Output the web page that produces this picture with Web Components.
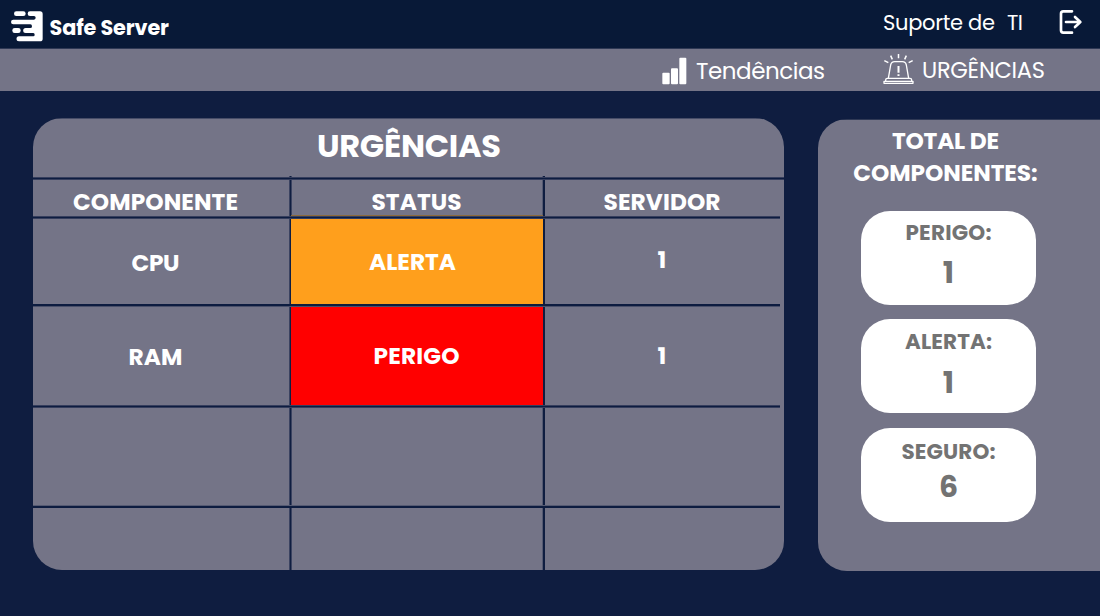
<!DOCTYPE html>
<html lang="pt-BR">
<head>
<meta charset="utf-8">
<title>Safe Server</title>
<style>
html,body{margin:0;height:100%;overflow:hidden;background:#0f1d40}
body{font-family:Poppins,Inter,"Open Sans",sans-serif;color:#fff}
</style>
</head>
<body>
<safe-app></safe-app>
<script>
const define = (name, html, after) => {
  const t = document.createElement('template');
  t.innerHTML = html;
  customElements.define(name, class extends HTMLElement {
    constructor() {
      super();
      this.attachShadow({mode: 'open'}).append(t.content.cloneNode(true));
    }
    connectedCallback() { if (after) after(this); }
  });
};

/* Text run tracked so that it fills the width in "w". */
define('fit-text', `<style>
:host{display:block;flex:none;white-space:pre;line-height:1}
span{display:inline-block}
</style><span><slot></slot></span>`, el => {
  const size = el.getAttribute('size'), w = +el.getAttribute('w');
  if (size) el.style.fontSize = size + 'px';
  if (!w) return;
  const span = el.shadowRoot.querySelector('span');
  el.style.width = w + 'px';
  span.style.letterSpacing = (w - span.getBoundingClientRect().width) / (el.textContent.length - 1) + 'px';
});

define('brand-logo', `<style>:host{display:block;width:32px;height:31px}svg{display:block}</style>
<svg width="32" height="31" viewBox="34 35 96 93" fill="#fff">
<path d="M91 36H121Q129 36 129 44V118Q129 126 121 126H58A7.5 7.5 0 0 1 58 111H101Q105 111 105 106T101 101H78A7.5 7.5 0 0 1 78 86H92Q97 86 97 80.500T92 75H41A7 7 0 0 1 41 61H103Q108 61 108 55.500T103 50H91A7 7 0 0 1 91 36Z"/>
<rect x="43" y="36" width="35" height="14" rx="7"/><rect x="38" y="86" width="25" height="15" rx="7"/></svg>`);

define('logout-icon', `<style>:host{display:block}svg{display:block}</style>
<svg width="24" height="26" viewBox="598 29 72 78" fill="none" stroke="#fff" stroke-width="8" stroke-linecap="round" stroke-linejoin="round">
<path d="M637 36H611Q604 36 604 43V93Q604 100 611 100H637M619 68H661M646 53L662 68L646 83"/></svg>`);

define('bars-icon', `<style>:host{display:block}svg{display:block}</style>
<svg width="25" height="28" viewBox="65 169 75 84" fill="#fff">
<rect x="66" y="216" width="22" height="35" rx="3"/><rect x="92" y="203" width="21" height="48" rx="3"/><rect x="117" y="171" width="21" height="80" rx="3"/></svg>`);

define('siren-icon', `<style>:host{display:block}svg{display:block}</style>
<svg width="31" height="32" viewBox="68 159 93 96" fill="none" stroke="#fff" stroke-width="4" stroke-linejoin="round">
<path d="M84 235L91 195Q93 185 103 185H126Q136 185 138 195L145 235M76 244V240Q76 235 81 235H149Q154 235 154 240V244M71 244H158V250H71Z"/>
<path d="M114.500 162V175M91 167L96 178M138 167L133 178M72 182L84 188M157 182L145 188" stroke-width="4.500"/>
<path d="M114.500 198V218M114.500 223V228" stroke-width="6"/></svg>`);

define('top-bar', `<style>
:host{display:flex;box-sizing:border-box;height:49px;background:#081937;border-bottom:1px solid #2f3955;padding:11px 17px 0 11px;align-items:flex-start}
.name{margin:7px 0 0 6.500px;font-weight:700}
.user{margin:1px 12px 0 auto}.area{margin:1px 36px 0 0}
logout-icon{margin:-2px 0 0}
</style>
<brand-logo></brand-logo><fit-text class="name" size="20.800" w="119.500">Safe Server</fit-text>
<fit-text class="user" size="21" w="112">Suporte de</fit-text><fit-text class="area" size="21" w="16">TI</fit-text>
<logout-icon></logout-icon>`);

define('nav-bar', `<style>
:host{display:flex;justify-content:flex-end;box-sizing:border-box;height:42px;background:#747487;padding:4px 55px 0 0}
div{display:flex}
.t{margin-right:58px}.t fit-text{margin:7px 0 0 9px}.t bars-icon{margin-top:4px}
.u fit-text{margin:6px 0 0 8px}
</style>
<div class="t"><bars-icon></bars-icon><fit-text size="23" w="129">Tendências</fit-text></div>
<div class="u"><siren-icon></siren-icon><fit-text size="22.500" w="123">URGÊNCIAS</fit-text></div>`);

define('table-row', `<style>
:host{display:grid;grid-template-columns:258px 252px 241px;box-sizing:border-box;flex:none}
</style><slot></slot>`);

define('table-cell', `<style>
:host{display:flex;align-items:center;justify-content:center;box-sizing:border-box;min-width:0}
:host([tone=alerta]){background:#ff9f1c;box-shadow:0 -4px #8c6a3c}
:host([tone=perigo]){background:#f00}
</style><slot></slot>`);

define('row-line', `<style>
:host{display:block;flex:none;height:3px;width:747px;position:relative;background:linear-gradient(#363e5d 1px,#0d1c40 1px 2px,#363e5d 2px)}
:host([full]){width:751px}
:host([low]){background:linear-gradient(#555a72 1px,#0d1c40 1px)}
:host([high]){background:linear-gradient(#0d1c40 2px,#4a506a 2px)}
</style>`);

define('urgency-table', `<style>
:host{display:flex;flex-direction:column;box-sizing:border-box;width:751px;height:452px;border-radius:29px;overflow:hidden;font-weight:700;
background:linear-gradient(90deg,#3b4361 1px,#0f1d40 1px 2px,#3b4361 2px) 256px 58px/3px 394px no-repeat,
linear-gradient(90deg,#555a72 1px,#0f1d40 1px) 509px 58px/3px 394px no-repeat,
linear-gradient(#474d68 1px,#747487 1px)}
h1{margin:0;height:59px;display:flex;box-sizing:border-box;padding:12px 0 0 284px;font-weight:700}
.head{height:36px}.head table-cell{padding-top:10px}
.r1{height:85px}.r2{height:98px}.r3{height:97px}.r4{height:62px}
.c1{padding-right:13px}.c3{padding-right:3px}
</style>
<h1><fit-text size="32" w="184">URGÊNCIAS</fit-text></h1>
<row-line full></row-line>
<table-row class="head"><table-cell class="c1"><fit-text size="23.300" w="165">COMPONENTE</fit-text></table-cell><table-cell style="padding-right:1px"><fit-text size="23.300" w="90">STATUS</fit-text></table-cell><table-cell class="c3"><fit-text size="23.300" w="117">SERVIDOR</fit-text></table-cell></table-row>
<row-line></row-line>
<table-row class="r1"><table-cell class="c1" style="padding-top:4px"><fit-text size="23.300" w="48">CPU</fit-text></table-cell><table-cell tone="alerta" style="padding:3px 9px 0 0"><fit-text size="23.300" w="87">ALERTA</fit-text></table-cell><table-cell class="c3" style="padding-bottom:2px"><fit-text size="23.300">1</fit-text></table-cell></table-row>
<row-line high></row-line>
<table-row class="r2"><table-cell class="c1" style="padding-top:3px"><fit-text size="23.300" w="54">RAM</fit-text></table-cell><table-cell tone="perigo" style="padding:2px 1px 0 0"><fit-text size="23.300" w="86">PERIGO</fit-text></table-cell><table-cell class="c3" style="padding-top:1px"><fit-text size="23.300">1</fit-text></table-cell></table-row>
<row-line></row-line>
<table-row class="r3"><table-cell></table-cell><table-cell></table-cell><table-cell></table-cell></table-row>
<row-line low></row-line>
<table-row class="r4"><table-cell></table-cell><table-cell></table-cell><table-cell></table-cell></table-row>`);

define('count-card', `<style>
:host{display:flex;flex-direction:column;align-items:center;box-sizing:border-box;width:175px;height:94px;border-radius:29px;background:#fff;color:#737373}
</style><slot></slot>`);

define('totals-panel', `<style>
:host{display:flex;flex-direction:column;box-sizing:border-box;width:282px;height:452px;padding:0 0 0 43px;border-radius:29px 0 0 29px;background:linear-gradient(#2f3955 1px,#747487 1px);font-weight:700}
h2{margin:0 0 17px -9px;width:187px;height:75px;box-sizing:border-box;padding-top:11px;font-size:23px;display:flex;flex-direction:column;align-items:center;gap:9px}
.cards{display:flex;flex-direction:column;gap:14.300px}
.a{padding-top:11px}.a .n{margin-top:14px}
.b{padding-top:11.500px}.b .n{margin-top:15.500px}
.c{padding-top:13.500px}.c .n{margin-top:9px}
</style>
<h2><fit-text size="23.300" w="107">TOTAL DE</fit-text><fit-text size="23.300" w="184.500">COMPONENTES:</fit-text></h2>
<div class="cards">
<count-card class="a"><fit-text size="21.500" w="86">PERIGO:</fit-text><fit-text class="n" size="30">1</fit-text></count-card>
<count-card class="b"><fit-text size="21.500" w="87">ALERTA:</fit-text><fit-text class="n" size="30">1</fit-text></count-card>
<count-card class="c"><fit-text size="21.500" w="94">SEGURO:</fit-text><fit-text class="n" size="30">6</fit-text></count-card>
</div>`);

define('safe-app', `<style>
:host{display:flex;flex-direction:column;width:1100px;height:616px;background:#0f1d40}
main{display:flex;justify-content:space-between;padding:27px 0 0 33px}
totals-panel{margin-top:1px}
</style>
<top-bar></top-bar><nav-bar></nav-bar>
<main><urgency-table></urgency-table><totals-panel></totals-panel></main>`);
</script>
</body>
</html>
